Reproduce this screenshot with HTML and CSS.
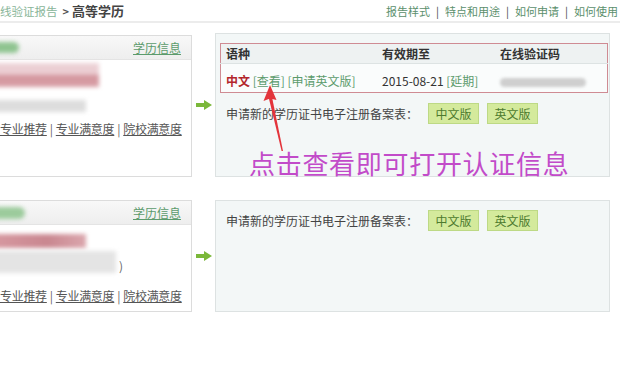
FILE: index.html
```html
<!DOCTYPE html>
<html lang="zh-CN">
<head>
<meta charset="utf-8">
<title>高等学历</title>
<link rel="stylesheet" href="styles.css">
</head>
<body>
<div class="page">
  <div class="top">
    <div class="crumb"><a class="crumb-link">线验证报告</a><span class="crumb-sep">&gt;</span><span class="crumb-cur">高等学历</span></div>
    <div class="nav"><a>报告样式</a><span class="bar">|</span><a>特点和用途</a><span class="bar">|</span><a>如何申请</a><span class="bar">|</span><a>如何使用</a></div>
  </div>
  <div class="list">
    <div class="row row1">
      <div class="card card1">
        <div class="card-head"><span class="blur-name"></span><a class="edu-link">学历信息</a></div>
        <div class="card-body">
          <div class="blur-pink"></div>
          <div class="blur-gray"></div>
          <div class="links"><a>专业推荐</a><span class="sep">|</span><a>专业满意度</a><span class="sep">|</span><a>院校满意度</a></div>
        </div>
      </div>
      <div class="go"><svg width="16" height="10" viewBox="0 0 16 10"><polygon points="0,3 8,3 8,0 16,5 8,10 8,7 0,7" fill="#7bb83a"/></svg></div>
      <div class="panel">
        <table class="cert">
          <tr><th class="c1">语种</th><th class="c2">有效期至</th><th class="c3">在线验证码</th></tr>
          <tr><td><span class="lang">中文</span> <a class="g">[查看]</a> <a class="g">[申请英文版]</a></td><td>2015-08-21 <a class="g">[延期]</a></td><td><span class="blur-code"></span></td></tr>
        </table>
        <div class="apply apply1">申请新的学历证书电子注册备案表：<span class="btn btn-first">中文版</span><span class="btn">英文版</span></div>
      </div>
    </div>
    <div class="row row2">
      <div class="card card2">
        <div class="card-head"><span class="blur-name name2"></span><a class="edu-link">学历信息</a></div>
        <div class="card-body">
          <div class="blur-pink pink2"></div>
          <div class="gray-line"><span class="blur-gray gray2"></span><span class="paren">)</span></div>
          <div class="links links2"><a>专业推荐</a><span class="sep">|</span><a>专业满意度</a><span class="sep">|</span><a>院校满意度</a></div>
        </div>
      </div>
      <div class="go"><svg width="16" height="10" viewBox="0 0 16 10"><polygon points="0,3 8,3 8,0 16,5 8,10 8,7 0,7" fill="#7bb83a"/></svg></div>
      <div class="panel">
        <div class="apply">申请新的学历证书电子注册备案表：<span class="btn btn-first">中文版</span><span class="btn">英文版</span></div>
      </div>
    </div>
  </div>
  <svg class="red-arrow" width="620" height="371" viewBox="0 0 620 371">
    <polygon points="270,85 263.5,101 270,98.5 276.5,100" fill="#e3343b"/>
    <polygon points="268.8,98 272.2,98 283,151 281.6,151" fill="#e3343b"/>
  </svg>
  <div class="note">点击查看即可打开认证信息</div>
</div>
</body>
</html>
```

FILE: styles.css
```css
html, body {
  margin: 0;
  padding: 0;
  background: #ffffff;
}
body {
  font-family: "Noto Sans CJK SC", "Noto Sans", "Liberation Sans", sans-serif;
  font-size: 12px;
  color: #333;
  overflow: hidden;
}
a {
  cursor: pointer;
}
.page {
  position: relative;
  width: 620px;
  height: 371px;
  overflow: hidden;
}
.top {
  display: flex;
  justify-content: space-between;
  align-items: center;
  height: 21px;
  border-bottom: 2px solid #ececec;
}
.crumb {
  margin-left: 0;
  display: flex;
  align-items: center;
  line-height: 18px;
}
.crumb-link {
  color: #88b598;
  font-size: 11.5px;
}
.crumb-sep {
  margin: 0 3px 0 5px;
  font-size: 11px;
  font-weight: bold;
  color: #555;
}
.crumb-cur {
  font-size: 13px;
  font-weight: bold;
  color: #444;
}
.nav {
  font-size: 11px;
  line-height: 18px;
  padding-right: 2px;
  color: #5b8f6c;
}
.nav .bar {
  margin: 0 6px;
  color: #444;
}
.list {
  padding-top: 10px;
}
.row {
  display: flex;
  align-items: flex-start;
}
.row1 {
  height: 144px;
}
.row2 {
  margin-top: 23px;
  height: 112px;
}
.card {
  margin-left: -12px;
  width: 204px;
  box-sizing: border-box;
  border: 1px solid #dcdcdc;
  background: #fff;
}
.card1 {
  margin-top: 2px;
  height: 142px;
}
.card2 {
  height: 112px;
}
.card-head {
  height: 23px;
  display: flex;
  justify-content: space-between;
  align-items: center;
  padding-right: 10px;
  background: linear-gradient(#f8f8f8, #eeeeee);
  border-bottom: 1px solid #e4e4e4;
}
.blur-name {
  width: 30px;
  height: 11px;
  border-radius: 6px;
  background: #8fc490;
  filter: blur(2px);
}
.name2 {
  width: 36px;
  height: 12px;
  background: #9ccb9c;
}
.edu-link {
  color: #5c9b6c;
  text-decoration: underline;
  font-size: 12px;
}
.blur-pink {
  margin-top: 3px;
  width: 110px;
  height: 24px;
  background: linear-gradient(#edd3d7 0, #eacbd0 48%, #d4959d 52%, #d8a0a7 100%);
  filter: blur(2px);
}
.blur-gray {
  display: block;
  margin-top: 13px;
  width: 97px;
  height: 12px;
  background: #dddddd;
  filter: blur(2px);
}
.links {
  margin-top: 9px;
  padding-left: 11px;
  line-height: 16px;
  color: #555;
  white-space: nowrap;
  letter-spacing: -0.3px;
}
.links a {
  text-decoration: underline;
  color: #555;
}
.links .sep {
  margin: 0 3px;
  color: #666;
}
.pink2 {
  margin-top: 9px;
  width: 97px;
  height: 14px;
  background: linear-gradient(90deg, #d89aa2, #c98790 60%, #dba6ad);
}
.gray-line {
  display: flex;
  align-items: flex-end;
  margin-top: 3px;
}
.gray2 {
  margin-top: 0;
  width: 127px;
  height: 22px;
  background: #e4e4e4;
}
.paren {
  margin-left: 3px;
  line-height: 14px;
  color: #666;
}
.links2 {
  margin-top: 15px;
}
.go {
  width: 23px;
  align-self: center;
  display: flex;
  justify-content: center;
}
.go svg {
  display: block;
}
.panel {
  width: 395px;
  box-sizing: border-box;
  align-self: stretch;
  border: 1px solid #dde2e2;
  background: #f3f7f7;
  padding: 9px 1px 0 4px;
}
.cert {
  width: 388px;
  border-collapse: collapse;
  border: 1px solid #cf8b93;
  background: #fafcfc;
}
.cert th {
  text-align: left;
  font-weight: bold;
  color: #333;
  background: #eef2f2;
  border-bottom: 1px solid #dde3e3;
  padding: 0 0 0 5px;
  line-height: 19px;
  height: 19px;
}
.cert .c1 {
  width: 151px;
}
.cert .c2 {
  width: 113px;
}
.cert td {
  padding: 8px 0 2px 5px;
  line-height: 18px;
  white-space: nowrap;
  color: #333;
}
.lang {
  color: #b3262c;
  font-weight: bold;
}
.g {
  color: #5c9b6c;
}
.blur-code {
  display: inline-block;
  vertical-align: middle;
  width: 86px;
  height: 9px;
  border-radius: 5px;
  background: #cfcfcf;
  filter: blur(1.5px);
}
.apply {
  display: flex;
  align-items: center;
  height: 21px;
  padding-left: 6px;
  color: #444;
  white-space: nowrap;
}
.apply1 {
  margin-top: 10px;
}
.btn {
  width: 51px;
  height: 21px;
  box-sizing: border-box;
  margin-left: 8px;
  background: #d4ea9c;
  border: 1px solid #bdd985;
  color: #4d7a2e;
  text-align: center;
  line-height: 19px;
}
.btn-first {
  margin-left: 10px;
}
.red-arrow {
  position: absolute;
  left: 0;
  top: 0;
  pointer-events: none;
}
.note {
  position: absolute;
  left: 249px;
  top: 147px;
  font-size: 26px;
  line-height: 32px;
  letter-spacing: 0.7px;
  color: #c24bc9;
  white-space: nowrap;
}
```
